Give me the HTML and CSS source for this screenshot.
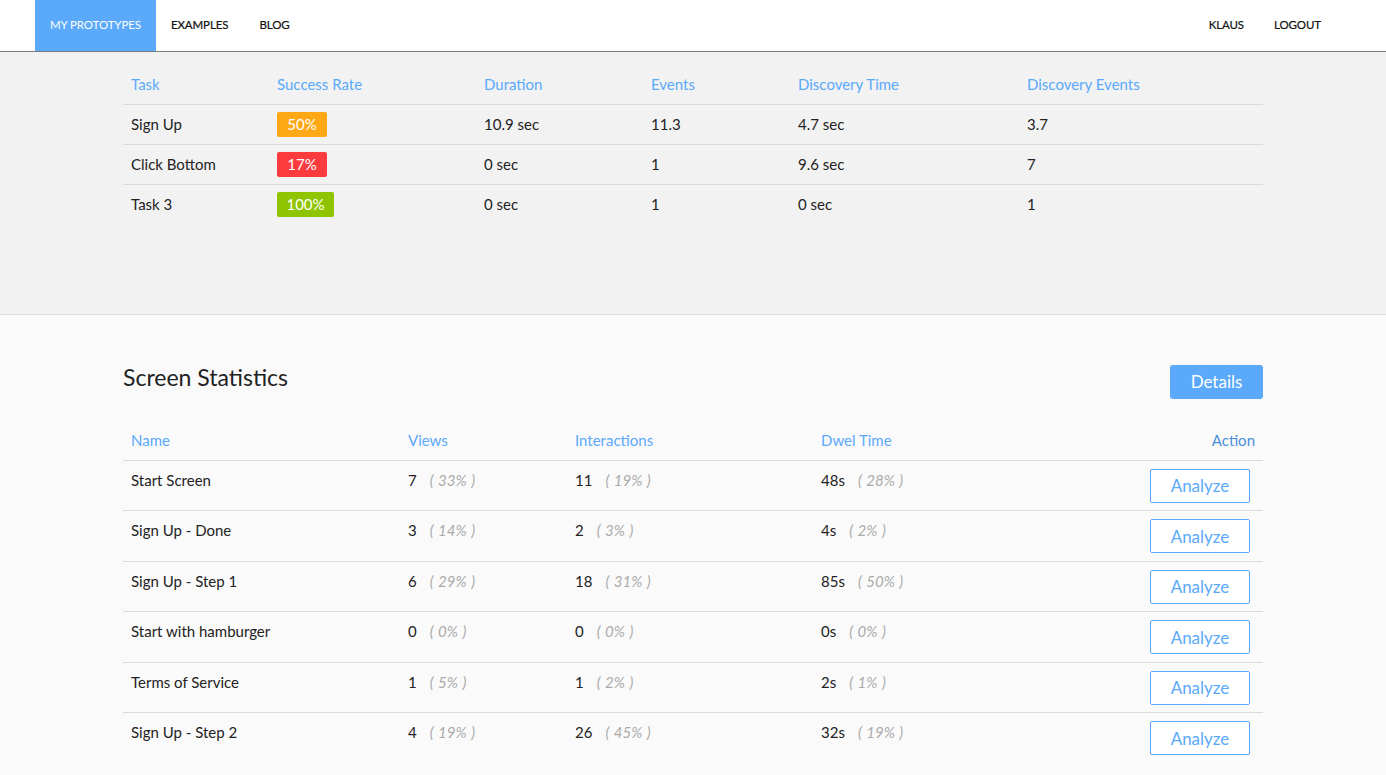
FILE: index.html
```html
<!DOCTYPE html>
<html>
<head>
<meta charset="utf-8">
<link rel="stylesheet" href="styles.css">
</head>
<body>
<nav class="nav">
  <div class="nav-left">
    <a class="nav-item active">MY PROTOTYPES</a>
    <a class="nav-item">EXAMPLES</a>
    <a class="nav-item">BLOG</a>
  </div>
  <div class="nav-right">
    <a class="nav-item">KLAUS</a>
    <a class="nav-item">LOGOUT</a>
  </div>
</nav>

<section class="tasks">
  <div class="container">
    <table class="task-table">
      <colgroup>
        <col style="width:146px"><col style="width:207px"><col style="width:167px"><col style="width:147px"><col style="width:229px"><col>
      </colgroup>
      <thead>
        <tr><th>Task</th><th>Success Rate</th><th>Duration</th><th>Events</th><th>Discovery Time</th><th>Discovery Events</th></tr>
      </thead>
      <tbody>
        <tr><td>Sign Up</td><td><span class="badge orange">50%</span></td><td>10.9 sec</td><td>11.3</td><td>4.7 sec</td><td>3.7</td></tr>
        <tr><td>Click Bottom</td><td><span class="badge red">17%</span></td><td>0 sec</td><td>1</td><td>9.6 sec</td><td>7</td></tr>
        <tr><td>Task 3</td><td><span class="badge green">100%</span></td><td>0 sec</td><td>1</td><td>0 sec</td><td>1</td></tr>
      </tbody>
    </table>
  </div>
</section>

<section class="screens">
  <div class="container">
    <div class="screens-head">
      <h2>Screen Statistics</h2>
      <button class="btn-primary">Details</button>
    </div>
    <table class="screen-table">
      <colgroup>
        <col style="width:277px"><col style="width:167px"><col style="width:246px"><col><col style="width:150px">
      </colgroup>
      <thead>
        <tr><th>Name</th><th>Views</th><th>Interactions</th><th>Dwel Time</th><th class="action">Action</th></tr>
      </thead>
      <tbody>
        <tr><td>Start Screen</td><td>7<span class="pct">( 33% )</span></td><td>11<span class="pct">( 19% )</span></td><td>48s<span class="pct">( 28% )</span></td><td class="action"><button class="btn-outline">Analyze</button></td></tr>
        <tr><td>Sign Up - Done</td><td>3<span class="pct">( 14% )</span></td><td>2<span class="pct">( 3% )</span></td><td>4s<span class="pct">( 2% )</span></td><td class="action"><button class="btn-outline">Analyze</button></td></tr>
        <tr><td>Sign Up - Step 1</td><td>6<span class="pct">( 29% )</span></td><td>18<span class="pct">( 31% )</span></td><td>85s<span class="pct">( 50% )</span></td><td class="action"><button class="btn-outline">Analyze</button></td></tr>
        <tr><td>Start with hamburger</td><td>0<span class="pct">( 0% )</span></td><td>0<span class="pct">( 0% )</span></td><td>0s<span class="pct">( 0% )</span></td><td class="action"><button class="btn-outline">Analyze</button></td></tr>
        <tr><td>Terms of Service</td><td>1<span class="pct">( 5% )</span></td><td>1<span class="pct">( 2% )</span></td><td>2s<span class="pct">( 1% )</span></td><td class="action"><button class="btn-outline">Analyze</button></td></tr>
        <tr><td>Sign Up - Step 2</td><td>4<span class="pct">( 19% )</span></td><td>26<span class="pct">( 45% )</span></td><td>32s<span class="pct">( 19% )</span></td><td class="action"><button class="btn-outline">Analyze</button></td></tr>
      </tbody>
    </table>
  </div>
</section>
</body>
</html>
```

FILE: styles.css
```css
* { box-sizing: border-box; }
html, body { margin: 0; padding: 0; }
body {
  font-family: Lato, "Liberation Sans", sans-serif;
  font-size: 15px;
  color: #222;
  background: #fafafa;
}
.nav {
  height: 52px;
  background: #fff;
  border-bottom: 1px solid #7a7a7a;
  display: flex;
  justify-content: space-between;
  padding: 0 50px 0 35px;
}
.nav-left, .nav-right { display: flex; }
.nav-item {
  display: flex;
  align-items: center;
  height: 51px;
  padding: 0 15px 2px;
  font-size: 11.5px;
  letter-spacing: -0.1px;
  color: #111;
  text-decoration: none;
  -webkit-text-stroke: 0.2px currentColor;
}
.nav-left .nav-item:nth-child(3) { padding-left: 16px; }
.nav-item.active { background: #5aa9fb; color: #fff; -webkit-text-stroke: 0; }

.container { width: 1140px; margin: 0 auto; }

.tasks {
  background: #f2f2f2;
  border-bottom: 1px solid #dcdcdc;
  height: 263px;
  padding-top: 13px;
}
table { border-collapse: collapse; width: 100%; table-layout: fixed; }
th {
  text-align: left;
  font-weight: normal;
  color: #5aa9fb;
  padding: 0 8px;
}
td { padding: 0 8px; }
.task-table th { height: 39px; border-bottom: 1px solid #dadada; }
.task-table td { height: 40px; border-bottom: 1px solid #dadada; }
.task-table tbody tr:last-child td { border-bottom: none; }
.badge {
  display: inline-block;
  width: 50px;
  height: 25px;
  line-height: 25px;
  border-radius: 2px;
  color: #fff;
  text-align: center;
  font-size: 15px;
}
.badge.green { width: 57px; }
.orange { background: #ffa816; }
.red { background: #fc3b3f; }
.green { background: #8fc500; }

.screens-head {
  display: flex;
  justify-content: space-between;
  align-items: center;
  padding-top: 50px;
  margin-bottom: 29px;
}
.screens-head h2 {
  margin: 0;
  font-weight: normal;
  font-size: 23px;
  color: #222;
  transform: translateY(-5px);
}
.btn-primary {
  width: 93px;
  height: 34px;
  padding-bottom: 2px;
  background: #5aa9fb;
  color: #fff;
  border: none;
  border-radius: 3px;
  font-family: inherit;
  font-size: 17px;
}
.screen-table th { height: 32px; padding-bottom: 8px; vertical-align: middle; border-bottom: 1px solid #dadada; }
.screen-table td {
  height: 50.6px;
  vertical-align: top;
  padding-top: 10px;
  border-bottom: 1px solid #dadada;
}
.screen-table tbody tr:last-child td { border-bottom: none; }
.screen-table .action { text-align: right; }
.screen-table th.action { color: #4a90d9; }
.screen-table td.action { padding-top: 8px; padding-right: 13px; }
.pct {
  color: #aaa;
  font-style: italic;
  margin-left: 13px;
  word-spacing: 1px;
}
.btn-outline {
  width: 100px;
  height: 34px;
  background: #fff;
  border: 1px solid #5aa9fb;
  border-radius: 2px;
  color: #5aa9fb;
  font-family: inherit;
  font-size: 17px;
}
```
